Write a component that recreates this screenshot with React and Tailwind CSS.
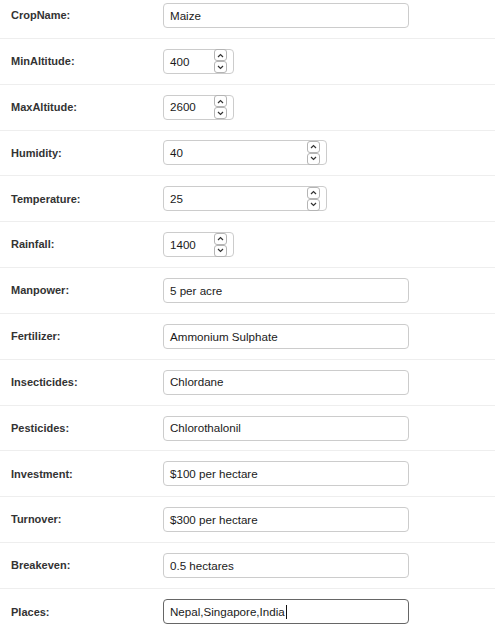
const rows = [
  { label: "CropName:", value: "Maize", kind: "text" },
  { label: "MinAltitude:", value: "400", kind: "short" },
  { label: "MaxAltitude:", value: "2600", kind: "short" },
  { label: "Humidity:", value: "40", kind: "wide" },
  { label: "Temperature:", value: "25", kind: "wide" },
  { label: "Rainfall:", value: "1400", kind: "short" },
  { label: "Manpower:", value: "5 per acre", kind: "text" },
  { label: "Fertilizer:", value: "Ammonium Sulphate", kind: "text" },
  { label: "Insecticides:", value: "Chlordane", kind: "text" },
  { label: "Pesticides:", value: "Chlorothalonil", kind: "text" },
  { label: "Investment:", value: "$100 per hectare", kind: "text" },
  { label: "Turnover:", value: "$300 per hectare", kind: "text" },
  { label: "Breakeven:", value: "0.5 hectares", kind: "text" },
  { label: "Places:", value: "Nepal,Singapore,India", kind: "text", focused: true },
]

function Spinner() {
  return (
    <div className="flex flex-col">
      <div className="w-[13px] h-[12px] border border-[#b5b5b5] rounded-[3px] flex items-center justify-center">
        <svg width="7" height="5" viewBox="0 0 7 5" fill="none" stroke="#333" strokeWidth="1.2">
          <path d="M1 4L3.5 1.5L6 4" />
        </svg>
      </div>
      <div className="w-[13px] h-[12px] border border-[#b5b5b5] rounded-[3px] flex items-center justify-center">
        <svg width="7" height="5" viewBox="0 0 7 5" fill="none" stroke="#333" strokeWidth="1.2">
          <path d="M1 1L3.5 3.5L6 1" />
        </svg>
      </div>
    </div>
  )
}

function Field({ value, kind, focused }) {
  const width = kind === "text" ? "w-[246px]" : kind === "wide" ? "w-[164px]" : "w-[71px]"
  return (
    <div
      className={`${width} h-[25px] flex items-center justify-between pl-[6px] pr-[6px] rounded-[4px] border ${
        focused ? "border-[#666]" : "border-[#cccccc]"
      } bg-white text-[11.6px] text-[#1a1a1a]`}
    >
      <span className="flex items-center">
        {value}
        {focused && <span className="inline-block w-px h-[14px] bg-[#111] ml-px" />}
      </span>
      {kind !== "text" && <Spinner />}
    </div>
  )
}

export default function App() {
  return (
    <div className="w-[497px] h-[634px] overflow-hidden bg-white font-['Liberation_Sans',Arial,sans-serif]">
      <div className="-mt-[7px]">
        {rows.map((row, i) => (
          <div
            key={row.label}
            className={`flex items-center h-[45.85px] mr-[2px] ${
              i < rows.length - 1 ? "border-b border-[#eeeeee]" : ""
            }`}
          >
            <div className="w-[163px] pl-[11px] text-[11px] font-bold text-[#333]">{row.label}</div>
            <Field value={row.value} kind={row.kind} focused={row.focused} />
          </div>
        ))}
      </div>
    </div>
  )
}
